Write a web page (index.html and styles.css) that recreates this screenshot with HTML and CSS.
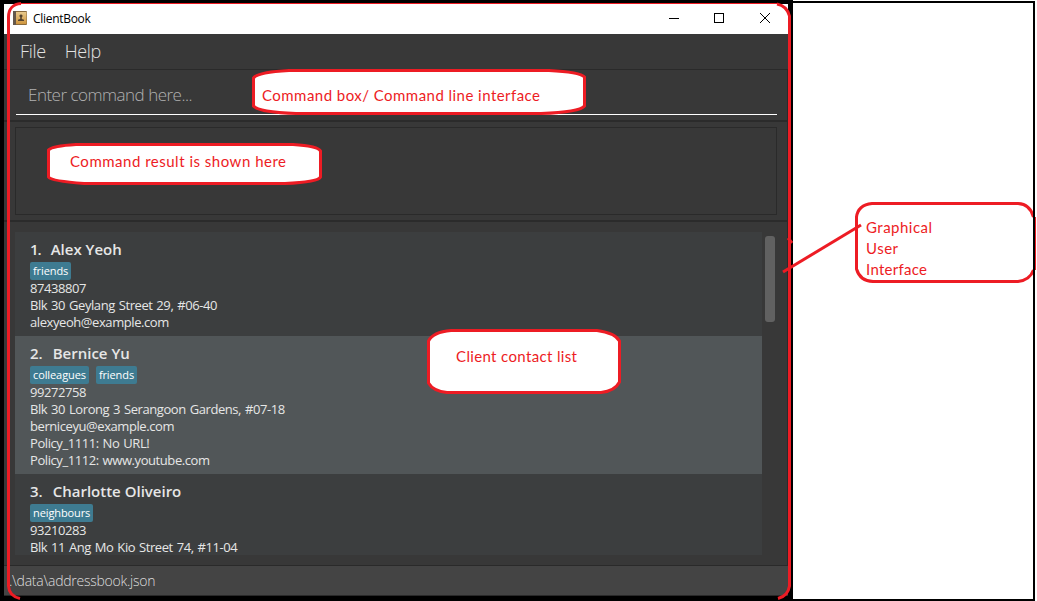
FILE: index.html
```html
<!DOCTYPE html>
<html lang="en">
<head>
<meta charset="utf-8">
<title>ClientBook</title>
<link rel="stylesheet" href="styles.css">
</head>
<body>
<div class="page">
  <div class="desktop">
    <div class="window">
      <header class="titlebar">
        <svg class="app-icon" width="14" height="14" viewBox="0 0 14 14">
          <defs><linearGradient id="cover" x1="0" y1="0" x2="0" y2="1"><stop offset="0" stop-color="#e8c98c"/><stop offset="1" stop-color="#cf963f"/></linearGradient></defs>
          <rect width="14" height="14" rx="1" fill="#8a6a3c"/>
          <rect width="3" height="14" fill="#65584b"/>
          <rect x="3" y="1" width="10.500" height="12" fill="url(#cover)"/>
          <path d="M8 3.500a1.500 1.500 0 0 1 .8 2.800V8l2.200.8V10H5V8.800L7.200 8V6.300A1.500 1.500 0 0 1 8 3.500z" fill="#54432f"/>
        </svg>
        <span class="title">ClientBook</span>
        <svg class="controls" width="104" height="12" viewBox="0 0 104 12" fill="none" stroke="#000" stroke-width="1">
          <path d="M1 6.500H11"/>
          <rect x="46.500" y="1.500" width="9" height="9"/>
          <path d="M92 1L102 11M102 1L92 11"/>
        </svg>
      </header>
      <nav class="menu"><span class="file">File</span><span class="help">Help</span></nav>
      <section class="command"><div class="input">Enter command here...</div></section>
      <section class="result"><div class="result-box"></div></section>
      <main class="contacts">
        <div class="list">
          <article class="card">
            <h2><span class="one">1.</span><span>Alex Yeoh</span></h2>
            <div class="tags"><span class="tag">friends</span></div>
            <p>87438807</p><p>Blk 30 Geylang Street 29, #06-40</p><p>alexyeoh@example.com</p>
          </article>
          <article class="card alt">
            <h2><span>2.</span><span>Bernice Yu</span></h2>
            <div class="tags"><span class="tag">colleagues</span><span class="tag">friends</span></div>
            <p>99272758</p><p>Blk 30 Lorong 3 Serangoon Gardens, #07-18</p><p>berniceyu@example.com</p><p>Policy_1111: No URL!</p><p>Policy_1112: www.youtube.com</p>
          </article>
          <article class="card">
            <h2><span>3.</span><span>Charlotte Oliveiro</span></h2>
            <div class="tags"><span class="tag">neighbours</span></div>
            <p>93210283</p><p>Blk 11 Ang Mo Kio Street 74, #11-04</p>
          </article>
        </div>
        <div class="scroll"><div class="thumb"></div></div>
      </main>
      <footer class="status">.\data\addressbook.json</footer>
    </div>
  </div>
  <aside class="margin"></aside>
</div>
<svg class="notes" width="1037" height="601" viewBox="0 0 1037 601">
  <g class="ink">
    <path d="M21 3.500C13 4 8.500 9 8.500 17V586Q9 596 20 598.500"/>
    <path class="thin" d="M20 3.500H779"/>
    <path d="M777 4Q787 6 789.500 16V586Q788 596 778 598.500"/>
    <path d="M788 238L792 243"/>
    <path class="bubble" d="M289 70.500H549Q580 72 584.500 77V106Q580 112 541 113.500H296Q258 112 253.500 106V78Q258 72 289 70.500Z"/>
    <path class="bubble" d="M76 144.500H293Q318 146 320.500 151V177Q318 182 285 183.500H84Q51 181 48.500 177V150Q52 146 76 144.500Z"/>
    <path class="bubble" d="M451 330.500H597Q615 333 619.500 341V382Q615 391 601 392.500H447Q433 391 428.500 383V341Q433 332 451 330.500Z"/>
    <path d="M1033.500 217Q1030 204 1018 203.500H872Q858 205 856.500 217V269Q860 281 873 281.500H1018Q1030 280 1033.500 270"/>
    <path class="thin" d="M1035.500 217V270"/>
    <path d="M783 272L861 225"/>
  </g>
  <path class="frame" d="M1034 2V600"/>
  <g class="labels">
    <text x="262" y="101" textLength="278">Command box/ Command line interface</text>
    <text x="70" y="167" textLength="216">Command result is shown here</text>
    <text x="456" y="362" textLength="121">Client contact list</text>
    <text x="866" y="233" textLength="66">Graphical</text>
    <text x="866" y="254" textLength="32">User</text>
    <text x="866" y="275" textLength="61">Interface</text>
  </g>
</svg>
</body>
</html>
```
FILE: styles.css
```css
* { box-sizing: border-box; }
body { margin: 0; background: #fff; font-family: "Open Sans", "Noto Sans", sans-serif; overflow: hidden; }
.page { display: flex; width: 1037px; height: 601px; }
.desktop { width: 793px; height: 601px; background: #000; padding: 4px 5px 6px 4px; }
.margin { width: 242px; margin-top: 1px; border: solid #000; border-width: 2px 2px 2px 0; background: #fff; }
.window { width: 784px; height: 592px; display: flex; flex-direction: column; background: #383838; }
.titlebar { height: 30px; flex: none; background: #fff; display: flex; align-items: center; padding: 0 16px 2px 9px; color: #000; }
.title { font-size: 12px; letter-spacing: -0.3px; margin-left: 6px; padding-top: 1px; }
.controls { margin-left: auto; }
.menu { height: 36px; flex: none; border-bottom: 1px solid #2a2a2a; padding: 4px 16px; color: #e2e2e2; font-weight: 300; font-size: 18px; line-height: 27px; letter-spacing: -0.35px; display: flex; gap: 19px; }
.command { height: 52px; flex: none; padding: 8px 10px 0 12px; border-bottom: 2px solid #2b2b2b; border-right: 1px solid #2b2b2b; }
.input { height: 37px; border-bottom: 1px solid #fff; padding-left: 12px; line-height: 34px; font-weight: 300; font-size: 17px; letter-spacing: -0.5px; color: #b1b1b1; }
.result { height: 100px; flex: none; padding: 5px 10px 5px 11px; border-bottom: 2px solid #2b2b2b; border-right: 1px solid #2b2b2b; }
.result-box { height: 88px; border: 1px solid #2a2a2a; }
.contacts { height: 344px; flex: none; border-bottom: 1px solid #2a2a2a; border-right: 1px solid #2b2b2b; padding: 10px 11px 10px 11px; display: flex; }
.list { width: 747px; flex: none; height: 323px; overflow: hidden; }
.card { background: #3c3e3f; padding: 5px 15px; color: #e6e6e6; }
.alt { background: #515658; }
.card h2 { margin: 0; height: 25px; line-height: 25px; font-size: 15px; font-weight: 600; letter-spacing: 0; display: flex; gap: 10px; }
.one { letter-spacing: -1px; }
.tags { display: flex; gap: 7px; height: 18px; }
.tag { background: #3e7b91; color: #fff; border-radius: 2px; padding: 0 3px; font-size: 11px; letter-spacing: -0.1px; line-height: 18px; }
.card p { margin: 0; height: 17px; line-height: 17px; font-size: 13px; letter-spacing: -0.42px; word-spacing: 0.9px; white-space: nowrap; }
.scroll { width: 14px; padding: 4px 1px 0 3px; }
.thumb { width: 10px; height: 86px; border-radius: 3px; background: #616161; }
.status { height: 30px; flex: none; background: #444; border-bottom: 1px solid #292929; padding-left: 5px; color: #dedede; font-size: 14px; font-weight: 300; letter-spacing: -0.25px; line-height: 29px; }
.notes { position: absolute; left: 0; top: 0; }
.ink { fill: none; stroke: #ed1c24; stroke-width: 3; }
.ink .thin { stroke-width: 1; }
.ink .bubble { fill: #fff; }
.frame { fill: none; stroke: #000; stroke-width: 2; }
.labels { fill: #ed1c24; font-family: Lato, "Open Sans", sans-serif; font-size: 15px; }
```
